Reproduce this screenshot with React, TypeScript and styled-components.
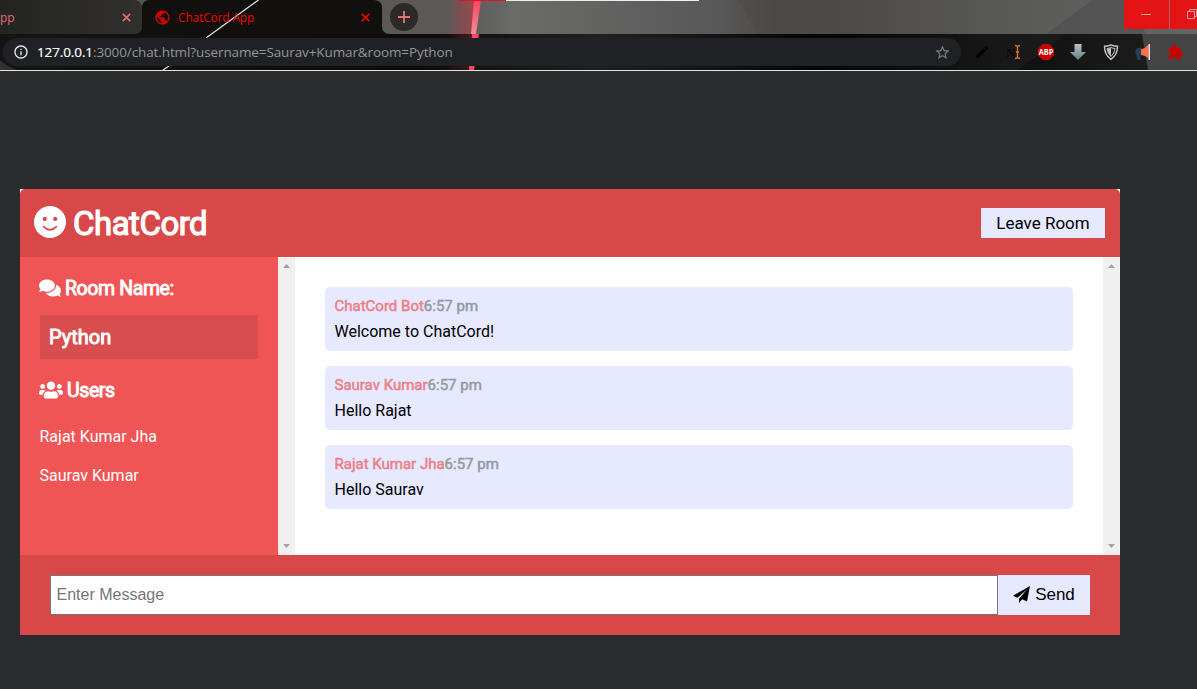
import React from 'react';
import styled, { createGlobalStyle } from 'styled-components';
import { FaComments, FaUsers } from 'react-icons/fa';
import { MdPublic, MdExtension, MdEdit, MdStarBorder, MdInfoOutline } from 'react-icons/md';

const GlobalStyle = createGlobalStyle`
  *, *::before, *::after { box-sizing: border-box; }
  body { margin: 0; background: #2b2c2e; font-family: Roboto, sans-serif; font-size: 16px; overflow: hidden; }
`;

const Page = styled.div`
  height: 689px;
  display: flex;
  flex-direction: column;
`;

const Browser = styled.header`
  position: relative;
  height: 71px;
  display: flex;
  flex-direction: column;
  overflow: hidden;
  border-bottom: 1px solid #dfe5e3;
  font-family: 'Open Sans', 'Noto Sans', sans-serif;
`;

const ThemeArt = styled.svg`
  position: absolute;
  inset: 0;
  z-index: 0;
`;

const TabStrip = styled.div`
  position: relative;
  height: 34px;
  display: flex;
  align-items: flex-start;
`;

const Tab = styled.div<{ $active?: boolean }>`
  width: ${p => (p.$active ? 240 : 142)}px;
  height: 34px;
  padding: ${p => (p.$active ? '0 12px 0 12px' : '0 11px 0 0')};
  display: flex;
  align-items: center;
  gap: 7px;
  color: ${p => (p.$active ? '#f00000' : '#e06c6c')};
  font-size: 12px;
  svg { flex: none; }
`;

const TabTitle = styled.span`
  flex: 1;
  white-space: nowrap;
  letter-spacing: -0.18px;
`;

const NewTab = styled.div`
  width: 28px;
  height: 28px;
  margin: 3px 0 0 8px;
  border-radius: 50%;
  background: #2b2a29;
  display: grid;
  place-items: center;
`;

const WindowControls = styled.div`
  margin-left: auto;
  display: flex;
  gap: 1px;
  background: #b0605e;
`;

const WindowButton = styled.div<{ $width: number }>`
  width: ${p => p.$width}px;
  height: 29px;
  background: #e41416;
  overflow: hidden;
`;

const Toolbar = styled.div`
  position: relative;
  height: 36px;
  padding: 4px 13px 4px 3px;
  display: flex;
  justify-content: space-between;
`;

const AddressBar = styled.div`
  width: 958px;
  height: 28px;
  border-radius: 14px;
  background: #202124;
  padding: 0 10px;
  display: flex;
  align-items: center;
  color: #e8eaed;
`;

const Url = styled.span`
  flex: 1;
  margin-left: 8px;
  font-size: 13.5px;
  letter-spacing: -0.11px;
  color: #93969a;
  b { color: #fff; font-weight: 400; -webkit-text-stroke: 0.2px #fff; }
`;

const Extensions = styled.div`
  width: 210px;
  display: flex;
  align-items: center;
  justify-content: space-between;
`;

const ChatWindow = styled.main`
  width: 1100px;
  margin: 118px 0 0 20px;
  background: #fff;
  display: flex;
  flex-direction: column;
`;

const ChatHeader = styled.div`
  height: 68px;
  padding: 0 15px 0 14px;
  border-radius: 5px 5px 0 0;
  background: #d84848;
  color: #fff;
  display: flex;
  align-items: center;
  justify-content: space-between;
`;

const Brand = styled.h1`
  margin: 0;
  display: flex;
  align-items: center;
  gap: 7px;
  font-size: 33px;
  font-weight: 400;
  letter-spacing: -0.5px;
  -webkit-text-stroke: 1.2px #fff;
  svg { margin-bottom: 2px; }
`;

const LeaveButton = styled.button`
  width: 124px;
  height: 30px;
  padding: 0;
  border: 0;
  background: #e6e9ff;
  color: #000;
  font: 17px Roboto, sans-serif;
`;

const ChatBody = styled.div`
  height: 298px;
  display: flex;
`;

const Sidebar = styled.aside`
  width: 258px;
  background: #f05555;
  color: #fff;
  padding: 20px 20px 0 19px;
`;

const SideHeading = styled.h3`
  margin: 0;
  height: 24px;
  padding-bottom: 1px;
  display: flex;
  align-items: center;
  gap: 4px;
  font-size: 19.5px;
  line-height: 23px;
  font-weight: 400;
  letter-spacing: -0.4px;
  -webkit-text-stroke: 0.9px #fff;
  svg { stroke-width: 0; margin-bottom: 1px; }
`;

const RoomName = styled.h2`
  margin: 14px 0 20px 1px;
  height: 44px;
  padding: 0 9px;
  line-height: 44px;
  background: #d84d4d;
  font-size: 20px;
  font-weight: 400;
  -webkit-text-stroke: 0.9px #fff;
`;

const UserList = styled.ul`
  margin: 22px 0 0;
  padding: 0 0 0 0.5px;
  list-style: none;
`;

const User = styled.li`
  height: 39px;
  line-height: 24px;
`;

const ScrollTrack = styled.div`
  width: 17px;
  padding: 7px 5px;
  background: #f0f0f0;
  display: flex;
  flex-direction: column;
  justify-content: space-between;
`;

const Arrow = styled.span<{ $down?: boolean }>`
  display: block;
  height: 4px;
  width: 7px;
  background: #a3a3a3;
  clip-path: ${p => (p.$down ? 'polygon(0 0, 100% 0, 50% 100%)' : 'polygon(50% 0, 100% 100%, 0 100%)')};
`;

const Messages = styled.section`
  flex: 1;
  padding: 30px;
  display: flex;
  flex-direction: column;
  gap: 15px;
`;

const Message = styled.article`
  height: 64px;
  padding: 7px 9.5px;
  border-radius: 5px;
  background: #e6e9ff;
`;

const Meta = styled.p`
  margin: 0;
  height: 24px;
  line-height: 24px;
  font-size: 15px;
  color: #ee7f86;
  -webkit-text-stroke: 0.5px currentColor;
  span { color: #9599a1; -webkit-text-stroke: 0.5px #9599a1; }
`;

const MessageText = styled.p`
  margin: 2px 0 0;
  line-height: 24px;
  color: #000;
`;

const Composer = styled.form`
  height: 80px;
  padding: 20px 30px;
  background: #d84848;
  display: flex;
`;

const MessageInput = styled.input`
  flex: 1;
  height: 40px;
  padding: 0 5.5px;
  border: 1px solid #767676;
  border-radius: 0;
  background: #fff;
  font: 16px 'Liberation Sans', sans-serif;
  &::placeholder { color: #757575; opacity: 1; }
`;

const SendButton = styled.button`
  width: 92px;
  height: 40px;
  padding: 0;
  border: 0;
  background: #e6e9ff;
  color: #000;
  display: flex;
  align-items: center;
  justify-content: center;
  gap: 5px;
  font: 17px 'Liberation Sans', sans-serif;
  letter-spacing: -0.1px;
  svg { margin-bottom: 2px; }
`;

const Close = () => (
  <svg width="9" height="9" viewBox="0 0 9 9" stroke="currentColor" strokeWidth="1.7">
    <path d="M.8.8 8.2 8.2M8.2.8.8 8.2" />
  </svg>
);

const Smile = () => (
  <svg width="32" height="32" viewBox="0 0 32 32">
    <circle cx="16" cy="16" r="16" fill="#fff" />
    <circle cx="10.800" cy="12.900" r="2.050" fill="#d84848" />
    <circle cx="21.200" cy="12.900" r="2.050" fill="#d84848" />
    <path d="M9.600 20.700q6.400 6.400 12.800 0" fill="none" stroke="#d84848" strokeWidth="1.700" strokeLinecap="round" />
  </svg>
);

const PaperPlane = () => (
  <svg width="17" height="17" viewBox="0 0 17 17" fill="currentColor">
    <path d="M17 0 0 9.700l4.500 2L14.300 3 6 12.700V17l3.200-3.700 4.800 2.200z" />
  </svg>
);

const Scrollbar = () => (
  <ScrollTrack>
    <Arrow />
    <Arrow $down />
  </ScrollTrack>
);

const ThemeBackground = () => (
  <ThemeArt width="1197" height="70" viewBox="0 0 1197 70">
    <defs>
      <linearGradient id="strip" x1="0" x2="1">
        <stop offset="0" stopColor="#555350" />
        <stop offset=".39" stopColor="#5b5a58" />
        <stop offset=".43" stopColor="#6b6b6a" />
        <stop offset=".6" stopColor="#585858" />
        <stop offset=".65" stopColor="#4c4a47" />
        <stop offset=".7" stopColor="#4c4a47" />
        <stop offset=".82" stopColor="#575756" />
        <stop offset="1" stopColor="#656565" />
      </linearGradient>
      <linearGradient id="bar" x1="0" x2="1">
        <stop offset="0" stopColor="#141412" />
        <stop offset=".35" stopColor="#0e0c0b" />
        <stop offset=".5" stopColor="#202020" />
        <stop offset=".62" stopColor="#101010" />
        <stop offset=".68" stopColor="#050505" />
        <stop offset=".85" stopColor="#191919" />
        <stop offset="1" stopColor="#1c1c1c" />
      </linearGradient>
      <linearGradient id="glow" x1="0" x2="1">
        <stop offset="0" stopColor="#e03040" stopOpacity="0" />
        <stop offset="1" stopColor="#e03040" stopOpacity=".5" />
      </linearGradient>
      <linearGradient id="beam" x1="0" x2="0" y1="0" y2="1">
        <stop offset="0" stopColor="#fb4560" />
        <stop offset="1" stopColor="#f48a9b" />
      </linearGradient>
      <linearGradient id="idle" x1="0" x2="1">
        <stop offset="0" stopColor="#242423" />
        <stop offset="1" stopColor="#31302e" />
      </linearGradient>
      <linearGradient id="facet" x1="0" x2="1">
        <stop offset="0" stopColor="#101010" />
        <stop offset="1" stopColor="#1c1c1c" />
      </linearGradient>
    </defs>
    <path fill="url(#strip)" d="M0 0h1197v34H0z" />
    <path fill="#4c4a47" opacity=".5" d="M738 0h60v34h-41z" />
    <path fill="#4a4a4a" opacity=".5" d="M1093 0h45l7 34h-99z" />
    <path fill="url(#glow)" d="M446 0h30l-5 34h-25z" />
    <path fill="url(#beam)" d="M474 0h7l-5 34h-5z" />
    <path fill="url(#bar)" d="M0 34h1197v36H0z" />
    <path fill="url(#facet)" d="M1066 34h77l5 36h-130z" />
    <path fill="#444" d="M1142 34h55v36h-49z" />
    <path fill="#3e3d3c" opacity=".7" d="M0 60q9 8 18 10H0z" />
    <path fill="url(#glow)" opacity=".5" d="M446 34h27l-3 36h-24z" />
    <path fill="#f04860" d="M472 34h7l-5 36h-5z" />
    <path fill="url(#idle)" d="M0 0h134q6 0 8 6v20q0 8-8 8H0z" />
    <path fill="#11100e" d="M134 34q8 0 8-8V8q0-8 8-8h224q8 0 8 8v18q0 8 8 8z" transform="translate(-0 0)" clipPath="url(#active-tab)" />
    <clipPath id="active-tab"><path d="M134 0h248v34H134z" /></clipPath>
    <path fill="#11100e" d="M374 0q8 0 8 8v18q0 8 8 8h-16z" />
    <path fill="#5a5957" d="M374 0h100v0H382v8q0-8-8-8z" />
    <path stroke="#e4e4e4" strokeWidth="1.2" d="M258.500 0 206 38M169 66l-6 4" />
    <path fill="#e81123" d="M458 0h48v1h-48z" />
    <path fill="#eee" d="M506 0h193v1H506z" />
  </ThemeArt>
);

const messages = [
  { name: 'ChatCord Bot', text: 'Welcome to ChatCord!' },
  { name: 'Saurav Kumar', text: 'Hello Rajat' },
  { name: 'Rajat Kumar Jha', text: 'Hello Saurav' },
];

export default function App() {
  return (
    <Page>
      <GlobalStyle />
      <Browser>
        <ThemeBackground />
        <TabStrip>
          <Tab><TabTitle>pp</TabTitle><Close /></Tab>
          <Tab $active>
            <MdPublic size={17} color="#d40000" />
            <TabTitle>ChatCord App</TabTitle>
            <Close />
          </Tab>
          <NewTab>
            <svg width="12" height="12" stroke="#e57373" strokeWidth="1.8"><path d="M6 0v12M0 6h12" /></svg>
          </NewTab>
          <WindowControls>
            <WindowButton $width={45}>
              <svg width="45" height="29" stroke="#f19a9a"><path d="M17 14.500h10" /></svg>
            </WindowButton>
            <WindowButton $width={27}>
              <svg width="27" height="29" fill="none" stroke="#f19a9a"><path d="M17.500 11.500h7v7h-7zM19.500 11.500v-2h7v7h-2" /></svg>
            </WindowButton>
          </WindowControls>
        </TabStrip>
        <Toolbar>
          <AddressBar>
            <MdInfoOutline size={16} />
            <Url><b>127.0.0.1</b>:3000/chat.html?username=Saurav+Kumar&amp;room=Python</Url>
            <MdStarBorder size={17} color="#7d7f82" />
          </AddressBar>
          <Extensions>
            <MdEdit size={16} color="#030303" />
            <svg width="16" height="16" viewBox="0 0 16 16">
              <text x="0" y="13" fontSize="13" fontFamily="Liberation Serif" fill="#050505">N</text>
              <path d="M9 1.500q2 0 2.500 1.500Q12 1.500 14 1.500M11.500 3v10M9 14.500q2 0 2.500-1.500.5 1.500 2.500 1.500M10 8h3" fill="none" stroke="#d8752e" strokeWidth="1.3" />
            </svg>
            <svg width="16" height="16" viewBox="0 0 16 16">
              <path fill="#c90000" d="M4.700 0h6.600L16 4.700v6.600L11.300 16H4.700L0 11.300V4.700z" />
              <text x="8" y="10.900" textAnchor="middle" fontSize="8" fontWeight="700" fontFamily="Open Sans" textLength="14.500" lengthAdjust="spacingAndGlyphs" fill="#fff">ABP</text>
            </svg>
            <svg width="16" height="16" viewBox="0 0 16 16">
              <defs><linearGradient id="download" x2="0" y2="1"><stop stopColor="#b9c2c4" /><stop offset="1" stopColor="#607e87" /></linearGradient></defs>
              <path fill="url(#download)" d="M4.500 0h7v8H16l-8 8-8-8h4.500z" />
            </svg>
            <svg width="16" height="16" viewBox="0 0 16 16" fill="none" stroke="#c4c4c4">
              <path strokeWidth="1.400" d="M8 .8q3 1.500 6.500 1.500 0 8.700-6.500 13Q1.500 11 1.500 2.300 5 2.300 8 .8z" />
              <path strokeWidth="1" d="M8 3.500q2 1 4 1Q11.500 9.500 8 12.500 4.500 9.500 4 4.500q2 0 4-1z" />
              <path fill="#c4c4c4" stroke="none" d="M8 4v8Q5 9.500 4.500 5z" />
            </svg>
            <svg width="16" height="16" viewBox="0 0 16 16">
              <path fill="#263e59" d="M1 5q3-2 6-1v7H5.500v5H2.500l-1-5Q-.5 9 1 5z" />
              <path fill="#ff7043" d="M6 5.500Q11 4 13.500.500v14Q11 11.500 6 11z" />
              <path fill="#dce2e7" d="M13.500 0H15v16h-1.500z" />
            </svg>
            <MdExtension size={17} color="#c90000" />
          </Extensions>
        </Toolbar>
      </Browser>

      <ChatWindow>
        <ChatHeader>
          <Brand><Smile />ChatCord</Brand>
          <LeaveButton>Leave Room</LeaveButton>
        </ChatHeader>
        <ChatBody>
          <Sidebar>
            <SideHeading><FaComments size={22} />Room Name:</SideHeading>
            <RoomName>Python</RoomName>
            <SideHeading><FaUsers size={24} />Users</SideHeading>
            <UserList>
              <User>Rajat Kumar Jha</User>
              <User>Saurav Kumar</User>
            </UserList>
          </Sidebar>
          <Scrollbar />
          <Messages>
            {messages.map(m => (
              <Message key={m.name}>
                <Meta>{m.name}<span>6:57 pm</span></Meta>
                <MessageText>{m.text}</MessageText>
              </Message>
            ))}
          </Messages>
          <Scrollbar />
        </ChatBody>
        <Composer>
          <MessageInput placeholder="Enter Message" />
          <SendButton type="button"><PaperPlane />Send</SendButton>
        </Composer>
      </ChatWindow>
    </Page>
  );
}
